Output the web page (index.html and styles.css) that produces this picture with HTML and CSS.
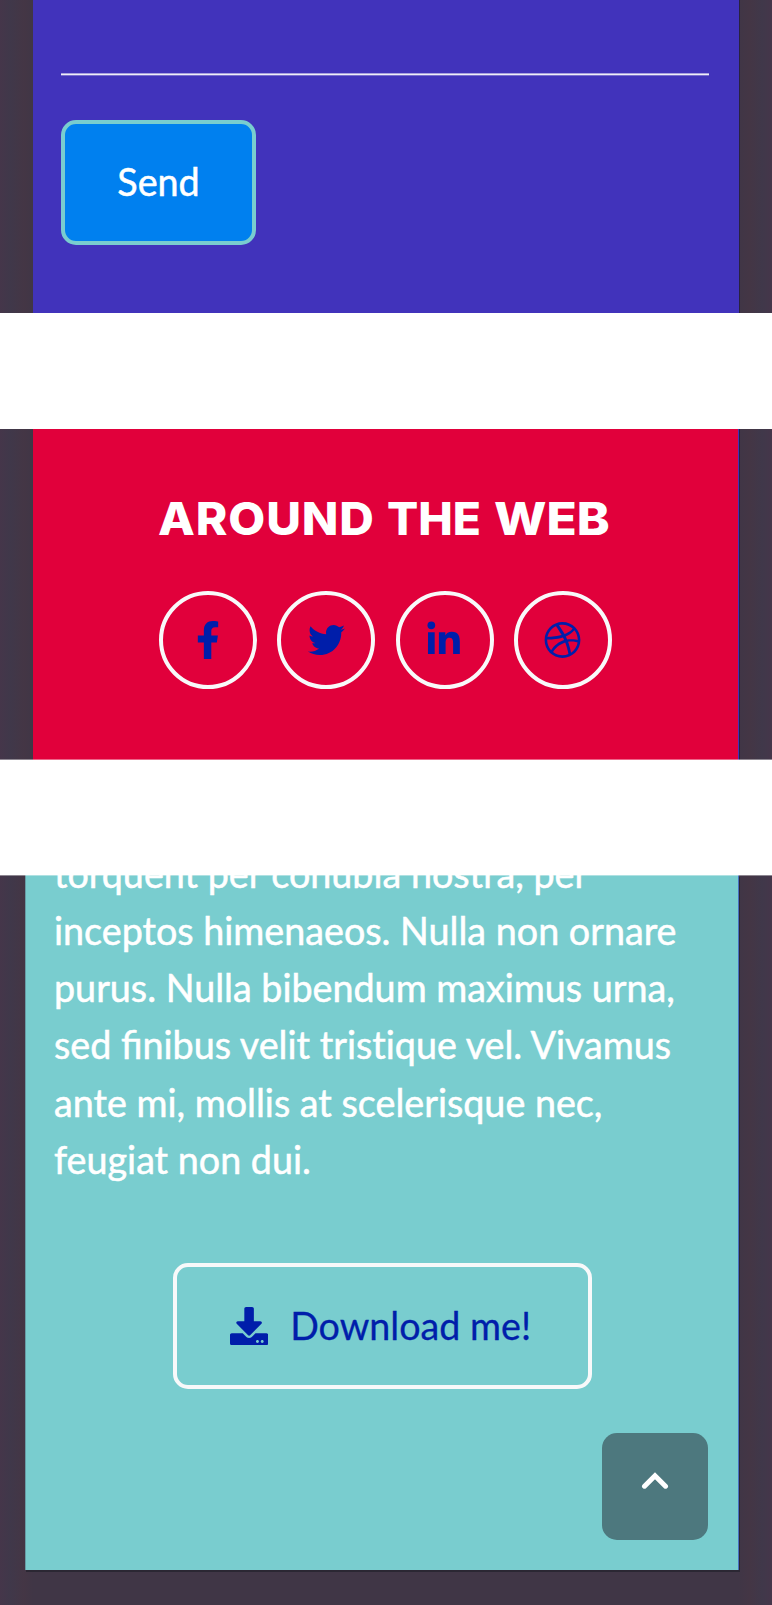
FILE: index.html
```html
<!DOCTYPE html>
<html lang="en">
<head>
<meta charset="utf-8">
<title>Contact</title>
<link rel="stylesheet" href="styles.css">
</head>
<body>
<section class="strip strip-contact">
  <div class="panel contact">
    <div class="field-line"></div>
    <button class="send">Send</button>
  </div>
</section>
<section class="strip strip-social">
  <div class="panel social">
    <h4 class="title"><span class="w1">AROUND</span><span class="w2">THE</span><span class="w3">WEB</span></h4>
    <div class="links">
      <a class="circle"><svg class="fb" viewBox="0 0 320 512"><path d="M279.14 288l14.22-92.66h-88.91v-60.13c0-25.35 12.42-50.06 52.24-50.06h40.42V6.26S260.43 0 225.36 0c-73.22 0-121.08 44.38-121.08 124.72v70.62H22.89V288h81.39v224h100.17V288z"/></svg></a>
      <a class="circle"><svg viewBox="0 0 512 512"><path d="M459.37 151.716c.325 4.548.325 9.097.325 13.645 0 138.72-105.583 298.558-298.558 298.558-59.452 0-114.68-17.219-161.137-47.106 8.447.974 16.568 1.299 25.34 1.299 49.055 0 94.213-16.568 130.274-44.832-46.132-.975-84.792-31.188-98.112-72.772 6.498.974 12.995 1.624 19.818 1.624 9.421 0 18.843-1.3 27.614-3.573-48.081-9.747-84.143-51.98-84.143-102.985v-1.299c13.969 7.797 30.214 12.67 47.431 13.319-28.264-18.843-46.781-51.005-46.781-87.391 0-19.492 5.197-37.36 14.294-52.954 51.655 63.675 129.3 105.258 216.365 109.807-1.624-7.797-2.599-15.918-2.599-24.04 0-57.828 46.782-104.934 104.934-104.934 30.213 0 57.502 12.67 76.67 33.137 23.715-4.548 46.456-13.32 66.599-25.34-7.798 24.366-24.366 44.833-46.132 57.827 21.117-2.273 41.584-8.122 60.426-16.243-14.292 20.791-32.161 39.308-52.628 54.253z"/></svg></a>
      <a class="circle"><svg viewBox="-20 0 512 512"><path d="M100.28 448H7.4V148.9h92.88zM53.79 108.1C24.09 108.1 0 83.5 0 53.8a53.79 53.79 0 0 1 107.58 0c0 29.7-24.1 54.3-53.79 54.3zM447.9 448h-92.68V302.4c0-34.7-.7-79.2-48.29-79.2-48.29 0-55.69 37.7-55.69 76.7V448h-92.78V148.9h89.08v40.8h1.3c12.4-23.5 42.69-48.3 87.88-48.3 94 0 111.28 61.9 111.28 142.3V448z"/></svg></a>
      <a class="circle"><svg viewBox="0 0 512 512"><path d="M256 8C119.252 8 8 119.252 8 256s111.252 248 248 248 248-111.252 248-248S392.748 8 256 8zm163.97 114.366c29.503 36.046 47.369 81.957 47.835 131.955-6.984-1.477-77.018-15.682-147.502-6.818-5.752-14.041-11.181-26.393-18.617-41.614 78.321-31.977 113.818-77.482 118.284-83.523zM396.421 97.87c-3.81 5.427-35.697 48.286-111.021 76.519-34.712-63.776-73.185-116.168-79.04-124.008 67.176-16.193 137.966 1.27 190.061 47.489zm-230.48-33.25c5.585 7.659 43.438 60.116 78.537 122.509-99.087 26.313-186.36 25.934-195.834 25.809C62.38 147.205 106.678 92.573 165.941 64.62zM44.17 256.323c0-2.166.043-4.322.108-6.473 9.268.19 111.92 1.513 217.706-30.146 6.064 11.868 11.857 23.915 17.174 35.949-76.599 21.575-146.194 83.527-180.531 142.306C64.794 360.405 44.17 310.73 44.17 256.323zm81.807 167.113c22.127-45.233 82.178-103.622 167.579-132.756 29.74 77.283 42.039 142.053 45.189 160.638-68.112 29.013-150.015 21.053-212.768-27.882zm248.38 8.489c-2.171-12.886-13.446-74.897-41.152-151.033 66.38-10.626 124.7 6.768 131.947 9.055-9.442 58.941-43.273 109.844-90.795 141.978z"/></svg></a>
    </div>
  </div>
</section>
<section class="strip strip-about">
  <div class="panel about">
    <div class="copy-window"><p class="copy">torquent per conubia nostra, per<br>inceptos himenaeos. Nulla non ornare<br>purus. Nulla bibendum maximus urna,<br>sed finibus velit <span class="no-liga">tristique</span> vel. Vivamus<br>ante mi, mollis at scelerisque nec,<br>feugiat non dui.</p></div>
    <a class="download"><svg viewBox="0 0 512 512"><path d="M216 0h80c13.3 0 24 10.7 24 24v168h87.7c17.8 0 26.7 21.5 14.1 34.1L269.7 378.3c-7.5 7.5-19.8 7.5-27.3 0L90.1 226.1c-12.6-12.6-3.7-34.1 14.1-34.1H192V24c0-13.3 10.7-24 24-24zm296 376v112c0 13.3-10.7 24-24 24H24c-13.3 0-24-10.7-24-24V376c0-13.3 10.7-24 24-24h146.7l49 49c20.1 20.1 52.5 20.1 72.6 0l49-49H488c13.3 0 24 10.7 24 24zm-124 88c0-11-9-20-20-20s-20 9-20 20 9 20 20 20 20-9 20-20zm64 0c0-11-9-20-20-20s-20 9-20 20 9 20 20 20 20-9 20-20z"/></svg><span>Download me!</span></a>
    <a class="to-top"><svg viewBox="0 0 28 18"><path d="M3.5 14.2 14 3.8 24.5 14.2"/></svg></a>
  </div>
</section>
</body>
</html>
```

FILE: styles.css
```css
* { box-sizing: border-box; }

body {
  margin: 0;
  background: #fff;
  font-family: Lato, sans-serif;
  font-size: 37.7px;
  color: #fff;
}

.strip {
  position: relative;
  overflow: hidden;
  background: linear-gradient(90deg, #45364a 0, #40384a 10px, #443645 24px, #403646 33px, #403646 739px, #443645 750px, #40384a 762px, #45364a 772px);
}

.panel { display: flex; flex-direction: column; }

/* Contact form */
.strip-contact { height: 313px; margin-bottom: 116px; }

.contact {
  width: 707px;
  height: 313px;
  margin-left: 33px;
  padding: 73px 30px 0 28px;
  background: #4133bb;
  border-right: 1px solid #29223f;
}

.field-line { height: 3px; background: linear-gradient(#a9a2df 0 1px, #efeef8 1px 2px, #7a70cd 2px 3px); }

.send {
  width: 195px;
  height: 125px;
  margin-top: 44px;
  padding: 0 0 3px;
  border: 4px solid #79cdcf;
  border-radius: 15px;
  background: #0080ef;
  color: #fff;
  font: inherit;
  -webkit-text-stroke: 0.5px #fff;
}

/* Social links */
.strip-social { height: 331px; margin-bottom: 115px; }

/* Soft one-pixel seam where a strip meets the white gap */
.strip-social::after,
.strip-about::after {
  content: "";
  position: absolute;
  left: 0;
  right: 0;
  height: 1px;
  background: rgba(255, 255, 255, 0.4);
}

.strip-social::after { bottom: 0; }
.strip-about::after { top: 0; }

.social {
  width: 706px;
  height: 331px;
  margin-left: 33px;
  padding: 61px 0 0 126px;
  background: #e1003b;
  border-right: 1px solid #4133bb;
  box-shadow: 1px 0 0 #29223f;
}

.title {
  display: flex;
  margin: 0 0 44px;
  font: 800 45.5px/57px Inter, sans-serif;
}

.title span { transform-origin: 0 50%; }
.w1 { width: 228px; margin-left: -1px; margin-right: 1px; letter-spacing: 0.8px; transform: scaleX(1.053); }
.w2 { width: 107px; transform: scaleX(1.015); }
.w3 { transform: scaleX(1.09); }

.links { display: flex; gap: 20.3px; }

.circle {
  display: flex;
  align-items: center;
  justify-content: center;
  width: 98px;
  height: 98px;
  border: 4px solid #f8f9fa;
  border-radius: 50%;
}

.circle svg { width: 37px; height: 38px; fill: #001eaa; }
.circle .fb { width: 24px; }

/* About */
.strip-about { height: 730px; padding-bottom: 34px; }

.about {
  position: relative;
  width: 714px;
  height: 695px;
  margin-left: 25px;
  background: #79cdcf;
  border-left: 1px solid #679da5;
  border-right: 1px solid #4870c0;
  box-shadow: 1px 2px 0 #2b2733;
}

.copy-window { height: 316px; overflow: hidden; padding-left: 28px; }

.copy {
  margin: -30.5px 0 0;
  line-height: 57.27px;
  white-space: nowrap;
  -webkit-text-stroke: 0.5px #fff;
}

.no-liga { font-variant-ligatures: none; }

.download {
  display: flex;
  align-items: center;
  width: 418.5px;
  height: 126px;
  margin: 72px 0 0 147px;
  padding-left: 53px;
  border: 4px solid #f8f9fa;
  border-radius: 15px;
  color: #001eaa;
  -webkit-text-stroke: 0.3px #001eaa;
}

.download svg { width: 38.2px; height: 38.2px; margin-right: 22px; fill: #001eaa; }
.download span { margin-top: -1px; }

.to-top {
  position: absolute;
  right: 30px;
  bottom: 30px;
  display: flex;
  justify-content: center;
  width: 106.5px;
  height: 107px;
  padding-top: 38.5px;
  border-radius: 15px;
  background: #4d787e;
}

.to-top svg { width: 28px; height: 18px; fill: none; stroke: #fff; stroke-width: 5; stroke-linecap: round; }
```
